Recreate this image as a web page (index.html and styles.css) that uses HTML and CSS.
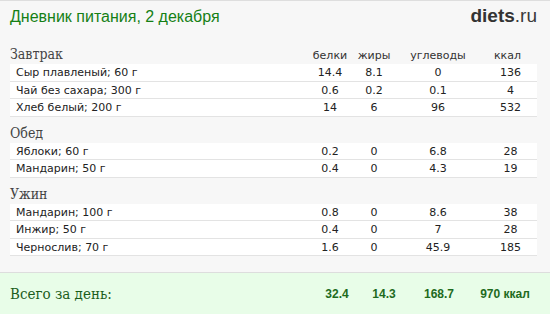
FILE: index.html
```html
<!DOCTYPE html>
<html lang="ru">
<head>
<meta charset="utf-8">
<link rel="stylesheet" href="styles.css">
</head>
<body>
<div class="diary">
  <header class="top">
    <h1 class="title">Дневник питания, 2 декабря</h1>
    <div class="logo"><b>diets</b>.ru</div>
  </header>

  <section class="meal">
    <div class="meal-head">
      <h2 class="meal-name">Завтрак</h2>
      <div class="cols">
        <span>белки</span><span>жиры</span><span>углеводы</span><span class="kcal-h">ккал</span>
      </div>
    </div>
    <div class="row"><span class="name">Сыр плавленый; 60 г</span><span>14.4</span><span>8.1</span><span>0</span><span>136</span></div>
    <div class="row"><span class="name">Чай без сахара; 300 г</span><span>0.6</span><span>0.2</span><span>0.1</span><span>4</span></div>
    <div class="row"><span class="name">Хлеб белый; 200 г</span><span>14</span><span>6</span><span>96</span><span>532</span></div>
  </section>

  <section class="meal">
    <div class="meal-head"><h2 class="meal-name">Обед</h2></div>
    <div class="row"><span class="name">Яблоки; 60 г</span><span>0.2</span><span>0</span><span>6.8</span><span>28</span></div>
    <div class="row"><span class="name">Мандарин; 50 г</span><span>0.4</span><span>0</span><span>4.3</span><span>19</span></div>
  </section>

  <section class="meal">
    <div class="meal-head"><h2 class="meal-name">Ужин</h2></div>
    <div class="row"><span class="name">Мандарин; 100 г</span><span>0.8</span><span>0</span><span>8.6</span><span>38</span></div>
    <div class="row"><span class="name">Инжир; 50 г</span><span>0.4</span><span>0</span><span>7</span><span>28</span></div>
    <div class="row"><span class="name">Чернослив; 70 г</span><span>1.6</span><span>0</span><span>45.9</span><span>185</span></div>
  </section>

  <footer class="total">
    <span class="total-label">Всего за день:</span>
    <span>32.4</span><span>14.3</span><span>168.7</span><span>970 ккал</span>
  </footer>
</div>
</body>
</html>
```

FILE: styles.css
```css
* { box-sizing: border-box; }
html, body { margin: 0; padding: 0; }
body {
  width: 550px;
  height: 314px;
  background: #f7f7f7;
  overflow: hidden;
}
.diary {
  border-top: 1px solid #dedede;
  width: 550px;
}
.top {
  display: flex;
  justify-content: space-between;
  align-items: flex-start;
  height: 37px;
  padding: 0 13px 0 10px;
}
.title {
  margin: 6px 0 0;
  font: normal 16px/20px "Liberation Sans", Arial, sans-serif;
  color: #158015;
}
.logo {
  margin-top: 4px;
  font: 19px/22px "Liberation Sans", Arial, sans-serif;
  color: #3a3a3a;
}
.logo b { font-weight: bold; color: #333; }

.meal { padding: 0 13px 0 10px; }
.meal-head {
  display: grid;
  grid-template-columns: 1fr 233px;
  height: 26px;
  align-items: end;
}
.meal-name {
  margin: 0;
  font: normal 14px/18px "DejaVu Serif", Georgia, serif;
  font-stretch: condensed;
  color: #444;
  padding-bottom: 1px;
}
.cols, .row {
  display: grid;
  grid-template-columns: 1fr 52px 36px 92px 53px;
  font: 11px/16px "DejaVu Sans", Verdana, sans-serif;
  color: #222;
}
.cols {
  grid-template-columns: 52px 36px 92px 53px;
  color: #333;
}
.cols span, .row span { text-align: center; }
.cols .kcal-h { padding-right: 6px; }
.row {
  background: #fff;
  border-bottom: 1px solid #e3e3e3;
  height: 17.5px;
  line-height: 17px;
}
.row .name { text-align: left; padding-left: 6px; }

.total {
  margin-top: 16px;
  border-top: 1px solid #dddddd;
  border-bottom: 1px solid #dcdcdc;
  background: #e8fde8;
  height: 43px;
  display: grid;
  grid-template-columns: 1fr 50px 44px 66px 66px;
  align-items: center;
  padding: 0 12px 0 10px;
  font: bold 12px/16px "Liberation Sans", Arial, sans-serif;
  color: #1e6b1e;
}
.total span { text-align: center; }
.total .total-label {
  text-align: left;
  font: normal 15px/18px "DejaVu Serif", Georgia, serif;
  font-stretch: condensed;
  color: #1c5e1c;
}
```
